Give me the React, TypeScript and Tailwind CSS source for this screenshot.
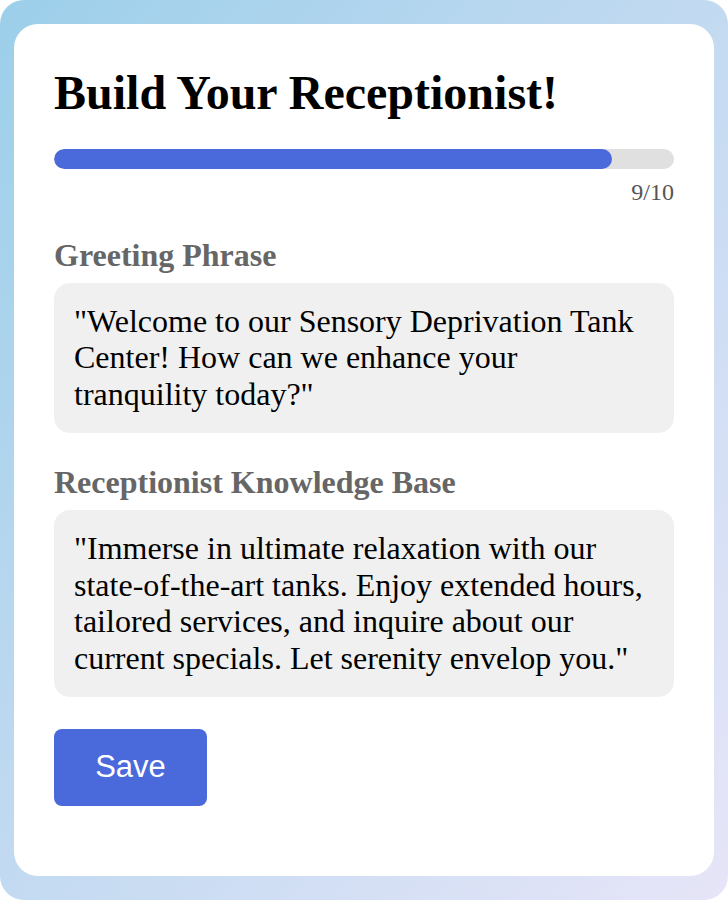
import React from "react";

export default function App() {
  const serif = { fontFamily: '"Liberation Serif", "Times New Roman", serif' };
  return (
    <div className="w-[728px] h-[900px] bg-white">
      <div className="w-full h-full rounded-[24px] bg-gradient-to-br from-[#9ccfea] to-[#e7e5f8] px-[14px] pt-[24px] pb-[24px]">
        <div
          className="w-full h-full bg-white rounded-[24px] px-[40px] pt-[41px]"
          style={serif}
        >
          <h1 className="text-[48px] font-bold leading-[1.15] text-black m-0">
            Build Your Receptionist!
          </h1>
          <div className="mt-[29px] h-[20px] w-full rounded-full bg-[#e0e0e0] overflow-hidden">
            <div className="h-full w-[90%] rounded-full bg-[#4a69da]" />
          </div>
          <div className="mt-[10px] text-right text-[24px] leading-[1.15] text-[#555555]">
            9/10
          </div>
          <div className="mt-[30px] text-[32px] font-bold leading-[1.15] text-[#666666]">
            Greeting Phrase
          </div>
          <div className="mt-[9px] rounded-[16px] bg-[#f0f0f0] px-[20px] py-[20px] text-[32px] leading-[1.15] text-black">
            "Welcome to our Sensory Deprivation Tank Center! How can we enhance your tranquility today?"
          </div>
          <div className="mt-[31px] text-[32px] font-bold leading-[1.15] text-[#666666]">
            Receptionist Knowledge Base
          </div>
          <div className="mt-[9px] rounded-[16px] bg-[#f0f0f0] px-[20px] py-[20px] text-[32px] leading-[1.15] text-black">
            "Immerse in ultimate relaxation with our state-of-the-art tanks. Enjoy extended hours, tailored services, and inquire about our current specials. Let serenity envelop you."
          </div>
          <button
            className="mt-[32px] w-[153px] h-[77px] rounded-[8px] bg-[#4a69da] text-white text-[31px]"
            style={{ fontFamily: '"Liberation Sans", Arial, sans-serif' }}
          >
            Save
          </button>
        </div>
      </div>
    </div>
  );
}
